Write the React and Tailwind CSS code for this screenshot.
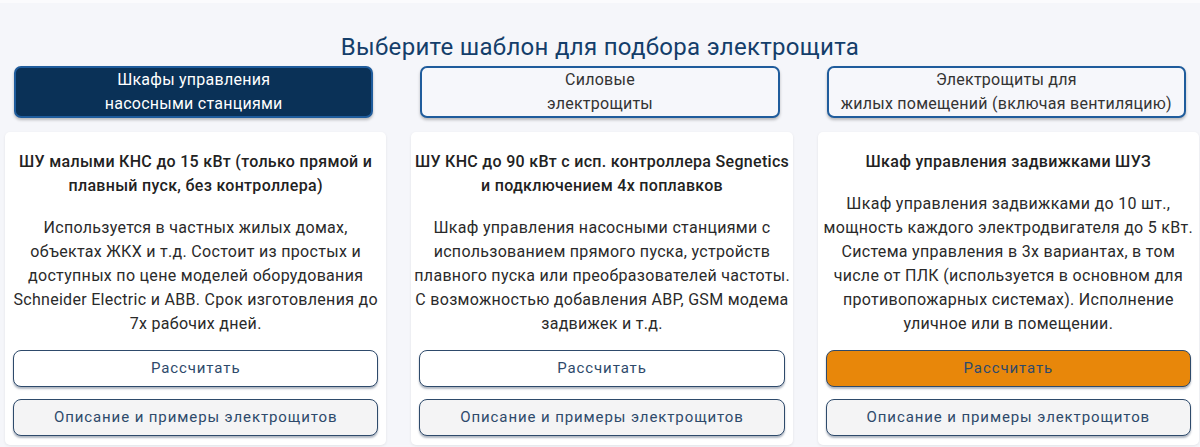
const tabs = [
  { lines: ['Шкафы управления', 'насосными станциями'], active: true },
  { lines: ['Силовые', 'электрощиты'], active: false },
  { lines: ['Электрощиты для', 'жилых помещений (включая вентиляцию)'], active: false },
];

const cards = [
  {
    title: ['ШУ малыми КНС до 15 кВт (только прямой и', 'плавный пуск, без контроллера)'],
    text: [
      'Используется в частных жилых домах,',
      'объектах ЖКХ и т.д. Состоит из простых и',
      'доступных по цене моделей оборудования',
      'Schneider Electric и ABB. Срок изготовления до',
      '7х рабочих дней.',
    ],
    highlight: false,
  },
  {
    title: ['ШУ КНС до 90 кВт с исп. контроллера Segnetics', 'и подключением 4х поплавков'],
    text: [
      'Шкаф управления насосными станциями с',
      'использованием прямого пуска, устройств',
      'плавного пуска или преобразователей частоты.',
      'С возможностью добавления АВР, GSM модема',
      'задвижек и т.д.',
    ],
    highlight: false,
  },
  {
    title: ['Шкаф управления задвижками ШУЗ'],
    text: [
      'Шкаф управления задвижками до 10 шт.,',
      'мощность каждого электродвигателя до 5 кВт.',
      'Система управления в 3х вариантах, в том',
      'числе от ПЛК (используется в основном для',
      'противопожарных системах). Исполнение',
      'уличное или в помещении.',
    ],
    highlight: true,
  },
];

function Tab({ lines, active }) {
  return (
    <button
      className={
        'ml-[9px] mr-[13px] h-[52px] rounded-[7px] border-2 border-[#1f5c9c] text-[16px] leading-[24px] tracking-[0.25px] shadow-[0_2px_3px_rgba(0,0,0,0.25)] ' +
        (active ? 'bg-[#0a3157] text-white' : 'bg-[#f6f7fb] text-[#333]')
      }
    >
      {lines.map((l) => (
        <div key={l}>{l}</div>
      ))}
    </button>
  );
}

function Card({ title, text, highlight }) {
  return (
    <div className="bg-white rounded-[5px] shadow-[0_1px_3px_rgba(0,0,0,0.08)] px-[3px] pt-[18px] pb-[9px] flex flex-col text-center text-[#222] tracking-[0.3px]">
      <h3 className="text-[16px] leading-[24px] font-medium whitespace-nowrap">
        {title.map((l) => (
          <span key={l} className="block">{l}</span>
        ))}
      </h3>
      <p className="mt-[18px] text-[16px] leading-[24px] text-[#2a2a2a] flex-1 whitespace-nowrap">
        {text.map((l) => (
          <span key={l} className="block">{l}</span>
        ))}
      </p>
      <button
        className={
          'mt-[14px] mx-[5px] h-[37px] rounded-[8px] border border-[#2e4a6b] text-[#2e4a6b] text-[15px] tracking-[0.06em] shadow-[0_2px_2px_rgba(30,50,80,0.35)] ' +
          (highlight ? 'bg-[#e8870a]' : 'bg-white')
        }
      >
        Рассчитать
      </button>
      <button className="mt-[12px] mx-[5px] h-[37px] rounded-[8px] border border-[#2e4a6b] text-[#2e4a6b] bg-[#f4f4f5] text-[15px] tracking-[0.06em] shadow-[0_2px_2px_rgba(30,50,80,0.35)]">
        Описание и примеры электрощитов
      </button>
    </div>
  );
}

export default function App() {
  return (
    <div className="min-h-screen bg-[#f5f6fa] font-['Roboto',sans-serif]">
      <div className="h-[3px] bg-[#fbfbfd]" />
      <h1 className="pt-[28px] text-center text-[24px] leading-[32px] tracking-[0.3px] text-[#143e6a]">
        Выберите шаблон для подбора электрощита
      </h1>
      <div className="mt-[3px] grid grid-cols-3 gap-x-[25px] px-[5px] pr-[1px]">
        {tabs.map((t) => (
          <Tab key={t.lines[0]} {...t} />
        ))}
      </div>
      <div className="mt-[14px] grid grid-cols-3 gap-x-[25px] px-[5px] pr-[1px]">
        {cards.map((c) => (
          <Card key={c.title[0]} {...c} />
        ))}
      </div>
    </div>
  );
}
